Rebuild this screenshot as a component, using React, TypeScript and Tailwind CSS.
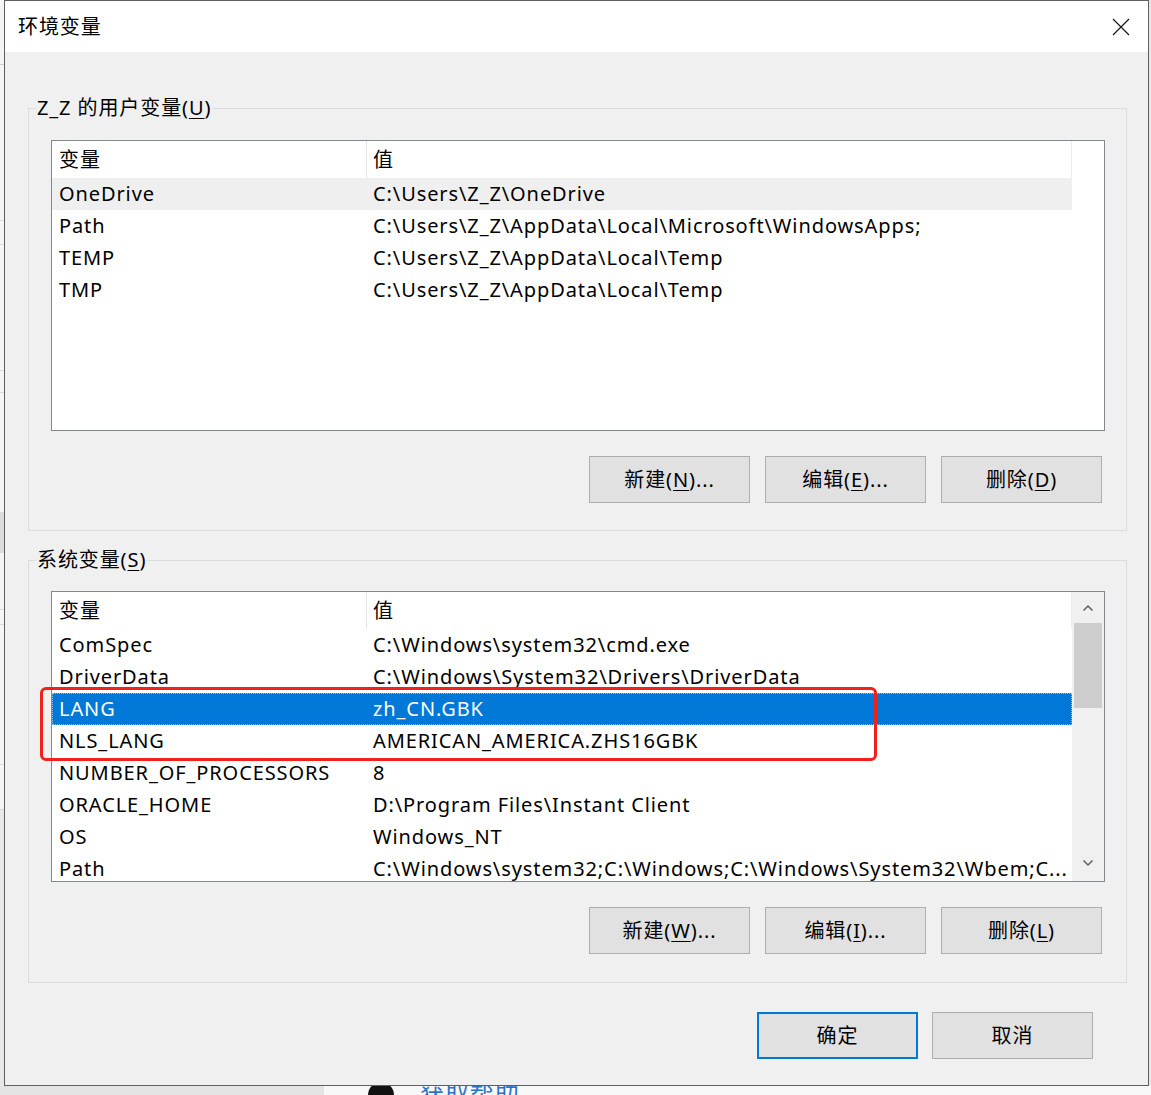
import React from "react";

const userVars: [string, string][] = [
  ["OneDrive", "C:\\Users\\Z_Z\\OneDrive"],
  ["Path", "C:\\Users\\Z_Z\\AppData\\Local\\Microsoft\\WindowsApps;"],
  ["TEMP", "C:\\Users\\Z_Z\\AppData\\Local\\Temp"],
  ["TMP", "C:\\Users\\Z_Z\\AppData\\Local\\Temp"],
];

const sysVars: [string, string][] = [
  ["ComSpec", "C:\\Windows\\system32\\cmd.exe"],
  ["DriverData", "C:\\Windows\\System32\\Drivers\\DriverData"],
  ["LANG", "zh_CN.GBK"],
  ["NLS_LANG", "AMERICAN_AMERICA.ZHS16GBK"],
  ["NUMBER_OF_PROCESSORS", "8"],
  ["ORACLE_HOME", "D:\\Program Files\\Instant Client"],
  ["OS", "Windows_NT"],
  ["Path", "C:\\Windows\\system32;C:\\Windows;C:\\Windows\\System32\\Wbem;C..."],
];

function Key({ k }: { k: string }) {
  return <span className="underline underline-offset-[3px] decoration-1">{k}</span>;
}

function Chevron({ down }: { down?: boolean }) {
  return (
    <svg width="12" height="8" viewBox="0 0 12 8" className={down ? "rotate-180" : ""}>
      <path d="M1.5 6.5 L6 2 L10.5 6.5" fill="none" stroke="#606060" strokeWidth="1.5" />
    </svg>
  );
}

function VarList({
  rows,
  selected,
  hover,
  scroll,
}: {
  rows: [string, string][];
  selected?: number;
  hover?: number;
  scroll?: boolean;
}) {
  return (
    <div className="w-[1054px] h-[291px] border border-[#828790] bg-white flex overflow-hidden">
      <div className="w-[1020px] flex flex-col">
        <div className="h-[37px] flex shrink-0 border-r border-[#ececec]">
          <div className="w-[315px] pl-[7px] flex items-center border-r border-[#e5e5e5]">变量</div>
          <div className="flex-1 pl-[6px] flex items-center">值</div>
        </div>
        {rows.map(([name, value], i) => (
          <div
            key={name + i}
            className={`h-[32px] shrink-0 flex items-center whitespace-nowrap ${
              i === selected
                ? "bg-[#0078d7] text-white outline-1 outline-dotted outline-[#8ec1ec] -outline-offset-1"
                : i === hover
                ? "bg-[#efefef]"
                : ""
            }`}
          >
            <div className="w-[315px] pl-[7px]">{name}</div>
            <div className="flex-1 pl-[6px] overflow-hidden">{value}</div>
          </div>
        ))}
      </div>
      <div className={`w-[32px] flex flex-col ${scroll ? "bg-[#f0f0f0]" : ""}`}>
        {scroll && (
          <>
            <div className="h-[31px] flex items-center justify-center">
              <Chevron />
            </div>
            <div className="h-[85px] mx-[2px] bg-[#cdcdcd]" />
            <div className="flex-1" />
            <div className="h-[31px] flex items-center justify-center pb-[6px]">
              <Chevron down />
            </div>
          </>
        )}
      </div>
    </div>
  );
}

function Btn({ children, primary }: { children: React.ReactNode; primary?: boolean }) {
  return (
    <div
      className={`w-[161px] h-[47px] flex items-center justify-center bg-[#e1e1e1] ${
        primary ? "border-2 border-[#0078d7]" : "border border-[#adadad]"
      }`}
    >
      {children}
    </div>
  );
}

export default function App() {
  return (
    <div className="w-[1151px] h-[1095px] overflow-hidden bg-[#f3f3f3] flex flex-col text-[20px] tracking-[0.9px] text-black font-['Noto_Sans','Noto_Sans_CJK_SC',sans-serif]">
      <div className="flex h-[1086px] shrink-0">
        {/* desktop behind, left edge */}
        <div className="w-[4px] flex flex-col bg-[#f5f5f5]">
          <div className="h-[65px] border-b border-[#d0d0d0]" />
          <div className="h-[156px] border-b border-[#d8d8d8]" />
          <div className="h-[24px] border-b border-[#d8d8d8]" />
          <div className="h-[126px] border-b border-[#d8d8d8]" />
          <div className="h-[22px] border-b border-[#d8d8d8]" />
          <div className="h-[120px] border-b border-[#d8d8d8]" />
          <div className="h-[40px] bg-[#dcdcdc]" />
          <div className="h-[57px] border-b border-[#d8d8d8]" />
          <div className="h-[15px] border-b border-[#d8d8d8]" />
          <div className="h-[140px] border-b border-[#d8d8d8]" />
          <div className="h-[45px] border-b border-[#d8d8d8]" />
          <div className="flex-1 bg-[#e8e8e8]" />
        </div>

        {/* dialog */}
        <div className="w-[1145px] border border-[#5f5f5f] flex flex-col bg-[#f0f0f0]">
          <div className="h-[51px] bg-white flex items-center justify-between pl-[13px] pr-[18px] shrink-0">
            <span className="leading-none">环境变量</span>
            <svg width="18" height="18" viewBox="0 0 18 18">
              <path d="M1 1 L17 17 M17 1 L1 17" stroke="#111" strokeWidth="1.1" />
            </svg>
          </div>

          <div className="flex-1 flex flex-col pl-[23px] pr-[21px]">
            {/* user vars */}
            <div className="relative mt-[56px] border border-[#dcdcdc] px-[22px] pt-[31px] pb-[27px]">
              <span className="absolute left-[7px] top-[-14px] px-[1px] bg-[#f0f0f0] leading-[26px]">
                Z_Z 的用户变量(<Key k="U" />)
              </span>
              <VarList rows={userVars} hover={0} />
              <div className="mt-[25px] flex justify-end gap-[15px] pr-[2px]">
                <Btn>
                  新建(<Key k="N" />)...
                </Btn>
                <Btn>
                  编辑(<Key k="E" />)...
                </Btn>
                <Btn>
                  删除(<Key k="D" />)
                </Btn>
              </div>
            </div>

            {/* system vars */}
            <div className="relative mt-[29px] border border-[#dcdcdc] px-[22px] pt-[30px] pb-[28px]">
              <span className="absolute left-[7px] top-[-14px] px-[1px] bg-[#f0f0f0] leading-[26px]">
                系统变量(<Key k="S" />)
              </span>
              <div className="relative">
                <VarList rows={sysVars} selected={2} scroll />
                {/* annotation */}
                <div className="absolute left-[-11px] top-[96px] w-[837px] h-[74px] border-[3px] border-[#f0201a] rounded-[6px]" />
              </div>
              <div className="mt-[25px] flex justify-end gap-[15px] pr-[2px]">
                <Btn>
                  新建(<Key k="W" />)...
                </Btn>
                <Btn>
                  编辑(<Key k="I" />)...
                </Btn>
                <Btn>
                  删除(<Key k="L" />)
                </Btn>
              </div>
            </div>

            <div className="mt-[29px] flex justify-end gap-[14px] pr-[34px]">
              <Btn primary>确定</Btn>
              <Btn>取消</Btn>
            </div>
          </div>
        </div>
        <div className="flex-1 bg-[#e8e8e8]" />
      </div>

      {/* desktop behind, bottom edge */}
      <div className="flex-1 flex overflow-hidden">
        <div className="w-[324px] bg-[#e4e4e4]" />
        <div className="flex-1 bg-[#f8f8f8] relative">
          <div className="absolute left-[44px] top-[-4px] w-[26px] h-[14px] bg-[#111] rounded-t-full" />
          <div className="absolute left-[96px] top-[-6px] text-[24px] leading-none text-[#2a72c8]">获取帮助</div>
        </div>
      </div>
    </div>
  );
}
